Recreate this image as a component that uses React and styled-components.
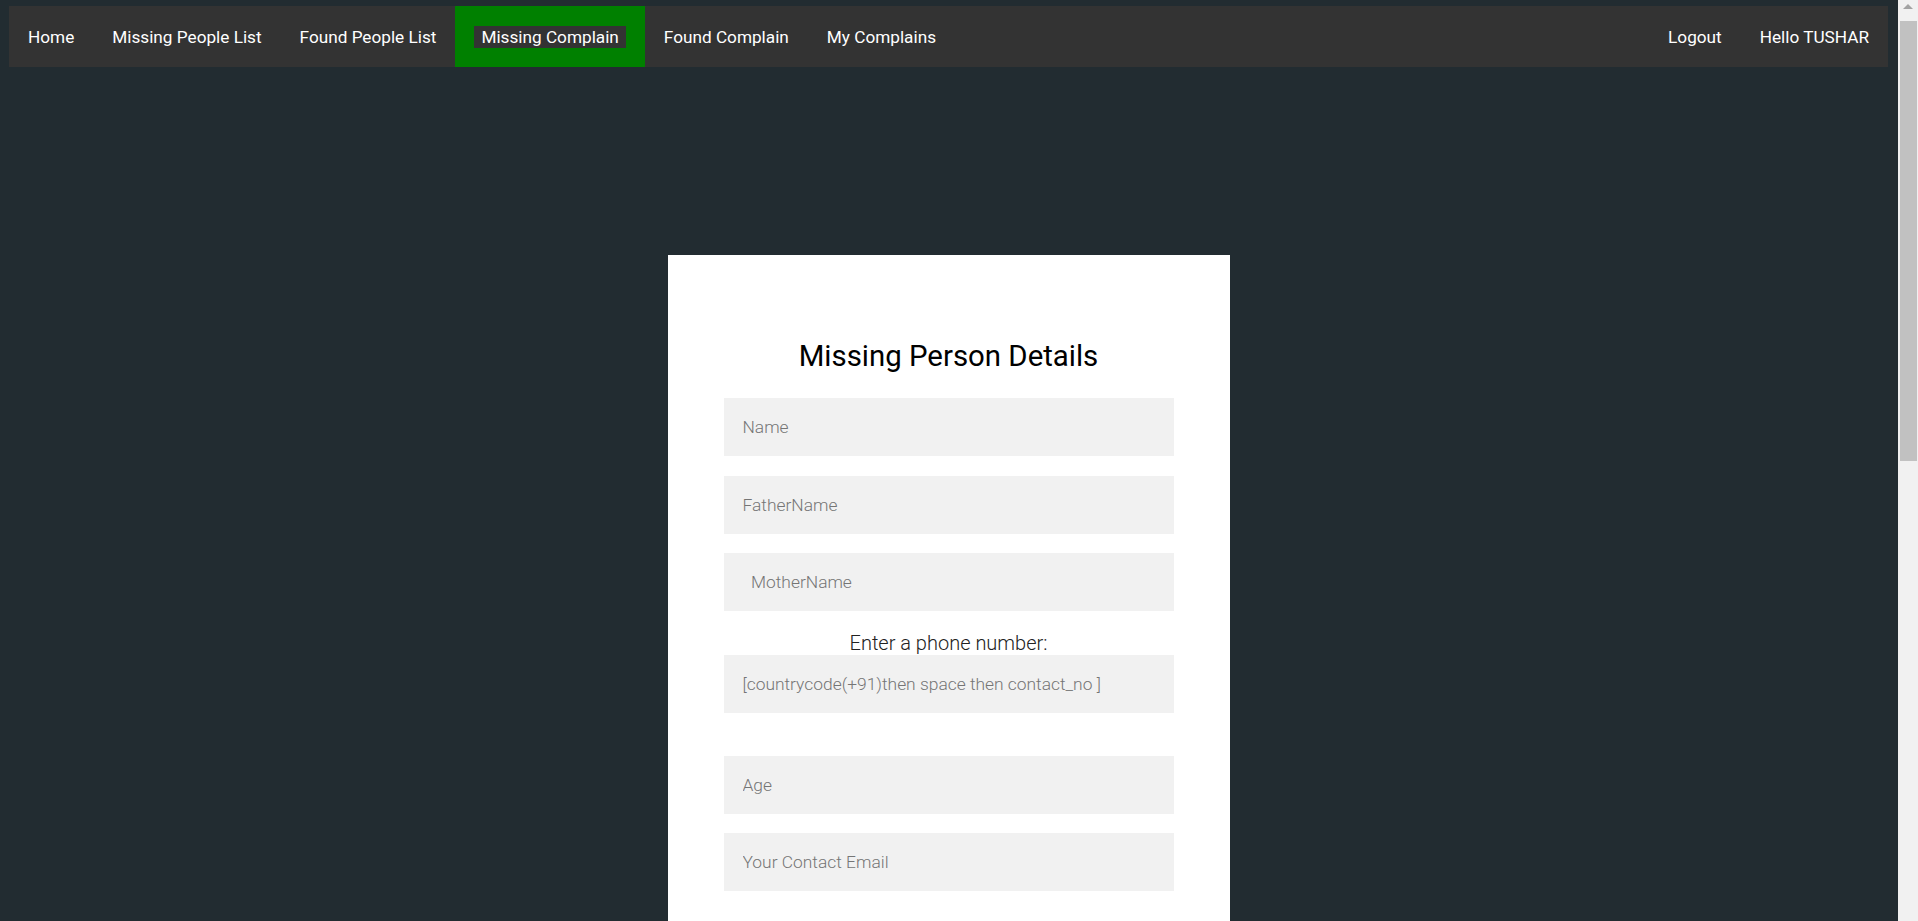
import styled, { createGlobalStyle } from "styled-components";

const GlobalStyle = createGlobalStyle`
    html, body {
        margin: 0;
        padding: 0;
    }
    body {
        background-color: #222c31;
        font-family: Roboto, "Liberation Sans", Arial, sans-serif;
    }
    * {
        box-sizing: border-box;
    }
    ::-webkit-scrollbar {
        display: none;
    }
`

const navLeft = ["Home", "Missing People List", "Found People List", "Missing Complain", "Found Complain", "My Complains"]
const active = "Missing Complain"

const fieldsTop = [
    { name: "name", placeholder: "Name" },
    { name: "fatherName", placeholder: "FatherName" },
    { name: "motherName", placeholder: "\u00a0\u00a0MotherName" },
]

const fieldsMiddle = [
    { name: "age", placeholder: "Age" },
    { name: "email", placeholder: "Your Contact Email" },
]

const fieldsBottom = [
    { name: "gender", placeholder: "Gender" },
    { name: "height", placeholder: "Height (in cm)" },
    { name: "complexion", placeholder: "Complexion" },
    { name: "mark", placeholder: "Identification Mark" },
    { name: "lastSeen", placeholder: "Last Seen Location" },
    { name: "date", placeholder: "Missing Date" },
    { name: "address", placeholder: "Address" },
    { name: "city", placeholder: "City" },
    { name: "state", placeholder: "State" },
]

const App = () => {

    return (
        <>
            <GlobalStyle />
            <Page>
                <TopNav>
                    {navLeft.map(item => (
                        <NavLink key={item} href="#" $active={item === active}>
                            {item === active ? <ActiveText>{item}</ActiveText> : item}
                        </NavLink>
                    ))}
                    <RightGroup>
                        <NavLink href="#">Logout</NavLink>
                        <NavLink href="#">Hello TUSHAR</NavLink>
                    </RightGroup>
                </TopNav>

                <Main>
                    <Card>
                        <Title>Missing Person Details</Title>
                        <form onSubmit={e => e.preventDefault()}>
                            {fieldsTop.map(f => (
                                <Field key={f.name} type="text" name={f.name} placeholder={f.placeholder} />
                            ))}
                            <PhoneLabel htmlFor="phone">Enter a phone number:</PhoneLabel>
                            <Field id="phone" type="tel" name="phone" placeholder="[countrycode(+91)then space then contact_no ]" />
                            <LineBreak />
                            {fieldsMiddle.map(f => (
                                <Field key={f.name} type="text" name={f.name} placeholder={f.placeholder} />
                            ))}
                            <LineBreak />
                            {fieldsBottom.map(f => (
                                <Field key={f.name} type="text" name={f.name} placeholder={f.placeholder} />
                            ))}
                            <SubmitButton type="submit">Submit</SubmitButton>
                        </form>
                    </Card>
                </Main>
            </Page>

            {/* window scrollbar as it shows in the screenshot */}
            <ScrollTrack aria-hidden="true">
                <ScrollArrow />
                <ScrollThumb />
            </ScrollTrack>
        </>
    )
}

const Page = styled.div`
    padding: 6px 30px 0 9px;
`

const TopNav = styled.nav`
    display: flex;
    height: 61px;
    background-color: #333333;
`

const NavLink = styled.a`
    display: flex;
    align-items: center;
    padding: 0 19px;
    color: #ffffff;
    font-size: 17.2px;
    font-weight: 400;
    text-decoration: none;
    white-space: nowrap;
    background-color: ${p => p.$active ? "#008000" : "transparent"};
`

const ActiveText = styled.span`
    background-color: #333333;
    padding: 1px 7px;
`

const RightGroup = styled.div`
    display: flex;
    margin-left: auto;
`

const Main = styled.main`
    display: flex;
    justify-content: center;
    padding: 188px 0 104px;
`

const Card = styled.div`
    width: 562px;
    background-color: #ffffff;
    padding: 84px 56px 60px;
`

const Title = styled.h2`
    margin: 0 0 25px;
    text-align: center;
    font-size: 29.4px;
    font-weight: 400;
    color: #000;
`

const Field = styled.input`
    display: block;
    width: 100%;
    height: 58px;
    margin: 0 0 19.5px;
    padding: 0 19px;
    border: none;
    outline: none;
    background-color: #f1f1f1;
    font-family: inherit;
    font-size: 17.4px;
    font-weight: 300;
    color: #333;

    &::placeholder {
        color: #757575;
        white-space: pre;
    }
`

const PhoneLabel = styled.label`
    display: block;
    text-align: center;
    font-size: 20px;
    font-weight: 300;
    color: #222;
`

const LineBreak = styled.div`
    height: 23.5px;
`

const SubmitButton = styled.button`
    display: block;
    width: 100%;
    height: 52px;
    margin-top: 10px;
    border: 0;
    background-color: #008000;
    color: #fff;
    font-family: inherit;
    font-size: 18px;
    cursor: pointer;
`

const ScrollTrack = styled.div`
    position: fixed;
    top: 0;
    right: 0;
    width: 20px;
    height: 100vh;
    background-color: #f1f1f1;
    display: flex;
    flex-direction: column;
    align-items: center;
`

const ScrollArrow = styled.div`
    width: 0;
    height: 0;
    margin: 4px 0 12px;
    border-left: 5px solid transparent;
    border-right: 5px solid transparent;
    border-bottom: 5px solid #a3a3a3;
`

const ScrollThumb = styled.div`
    width: 17px;
    height: 440px;
    margin-left: 1px;
    background-color: #c1c1c1;
`

export default App
